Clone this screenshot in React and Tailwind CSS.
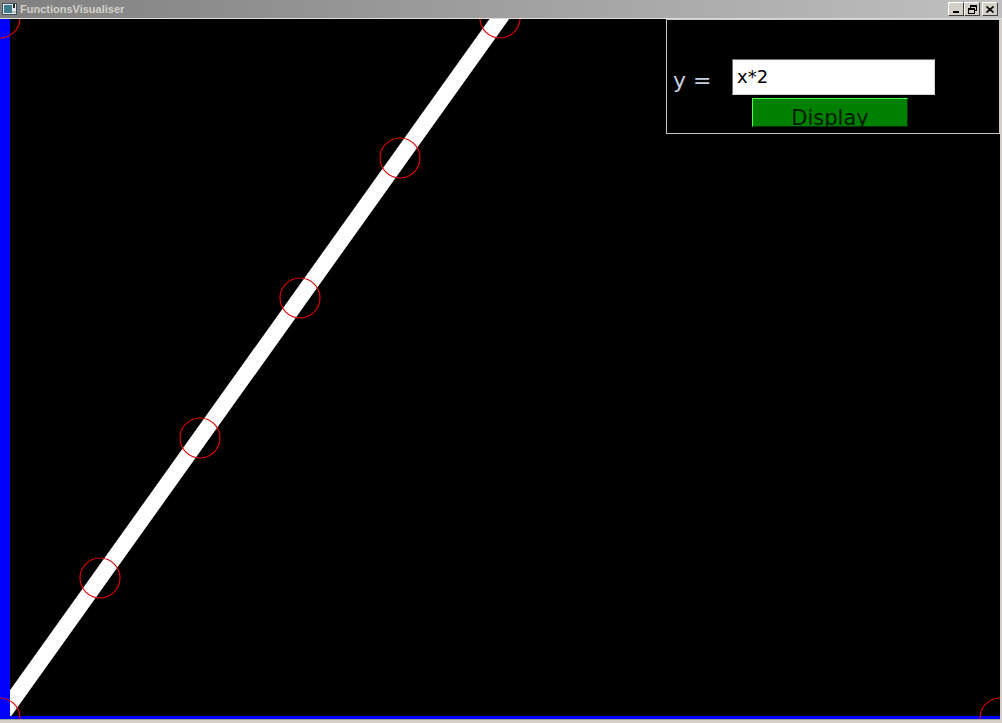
import React from "react";

function TitleButton({ children }) {
  return (
    <div className="w-[16px] h-[14px] bg-[#d4d0c8] border border-t-white border-l-white border-r-[#404040] border-b-[#404040] flex items-center justify-center">
      {children}
    </div>
  );
}

export default function App() {
  const pts = [0, 100, 200, 300, 400, 500];
  return (
    <div className="w-[1002px] h-[723px] bg-[#d4d0c8] flex flex-col overflow-hidden" style={{ fontFamily: "Tahoma, 'DejaVu Sans', sans-serif" }}>
      <div className="h-[18px] bg-gradient-to-r from-[#808080] to-[#c0c0c0] flex items-center pl-[2px] pr-[4px]">
        <svg width="16" height="14" viewBox="0 0 16 14" className="mr-[2px]">
          <rect x="0.5" y="1.5" width="14" height="11" fill="#e8ecf0" stroke="#405060" />
          <rect x="2" y="3" width="8" height="8" fill="#3a7a8a" />
          <rect x="11" y="2" width="2" height="4" fill="#202020" />
          <rect x="10" y="9" width="4" height="2" fill="#c0c0c0" />
        </svg>
        <span className="text-[11px] font-bold text-[#d4d0c8] leading-none" style={{ fontFamily: "'Liberation Sans', Arial, sans-serif" }}>FunctionsVisualiser</span>
        <div className="flex-1" />
        <div className="flex items-center">
          <TitleButton>
            <div className="w-[6px] h-[2px] bg-black mt-[6px]" />
          </TitleButton>
          <TitleButton>
            <svg width="9" height="9" viewBox="0 0 9 9">
              <rect x="2.5" y="0.5" width="6" height="5" fill="none" stroke="black" />
              <line x1="2" y1="1.5" x2="9" y2="1.5" stroke="black" />
              <rect x="0.5" y="3.5" width="6" height="5" fill="#d4d0c8" stroke="black" />
              <line x1="0" y1="4.5" x2="7" y2="4.5" stroke="black" />
            </svg>
          </TitleButton>
          <div className="w-[2px]" />
          <TitleButton>
            <svg width="8" height="7" viewBox="0 0 8 7">
              <path d="M0.5 0.5 L7.5 6.5 M7.5 0.5 L0.5 6.5" stroke="black" strokeWidth="1.6" />
            </svg>
          </TitleButton>
        </div>
      </div>
      <div className="h-[1px] bg-[#e0ded8]" />
      <div className="relative w-[1000px] h-[701px] bg-black">
        <svg width="1000" height="701" viewBox="0 19 1000 701" className="block">
          <line x1="-10" y1="732" x2="515" y2="-3" stroke="white" strokeWidth="16" />
          <rect x="0" y="19" width="10" height="701" fill="#0000ff" />
          <rect x="0" y="716" width="1000" height="3" fill="#0000ff" />
          {pts.map((x) => (
            <circle key={x} cx={x} cy={718 - 1.4 * x} r="20" fill="none" stroke="#e00000" strokeWidth="1.2" />
          ))}
          <circle cx="0" cy="18" r="20" fill="none" stroke="#e00000" strokeWidth="1.2" />
          <circle cx="1000" cy="718" r="20" fill="none" stroke="#e00000" strokeWidth="1.2" />
          <rect x="0" y="719" width="1000" height="1" fill="#a0a0a0" />
        </svg>
        <div className="absolute left-[666px] top-0 w-[334px] h-[115px] bg-black border border-[#c8c8c8]">
          <div className="flex items-start pl-[6px] pt-[39px]">
            <span className="text-[22px] text-[#c8d0e0] leading-none w-[59px] mt-[11px]" style={{ fontFamily: "'DejaVu Sans', sans-serif" }}>y =</span>
            <div className="w-[203px] h-[36px] bg-white border border-t-[#707070] border-l-[#707070] border-b-[#d0d0d0] border-r-[#d0d0d0] flex items-center pl-[4px]">
              <span className="text-[18px] text-black leading-none" style={{ fontFamily: "'DejaVu Sans', sans-serif" }}>x*2</span>
            </div>
          </div>
          <div className="ml-[85px] mt-[3px] w-[156px] h-[29px] bg-[#008000] border border-t-[#50ff50] border-l-[#50ff50] border-b-[#003000] border-r-[#003000] overflow-hidden flex justify-center">
            <span className="text-[21px] text-[#001a00] leading-none mt-[9px] shrink-0" style={{ fontFamily: "'DejaVu Sans', sans-serif" }}>Display</span>
          </div>
        </div>
      </div>
    </div>
  );
}
